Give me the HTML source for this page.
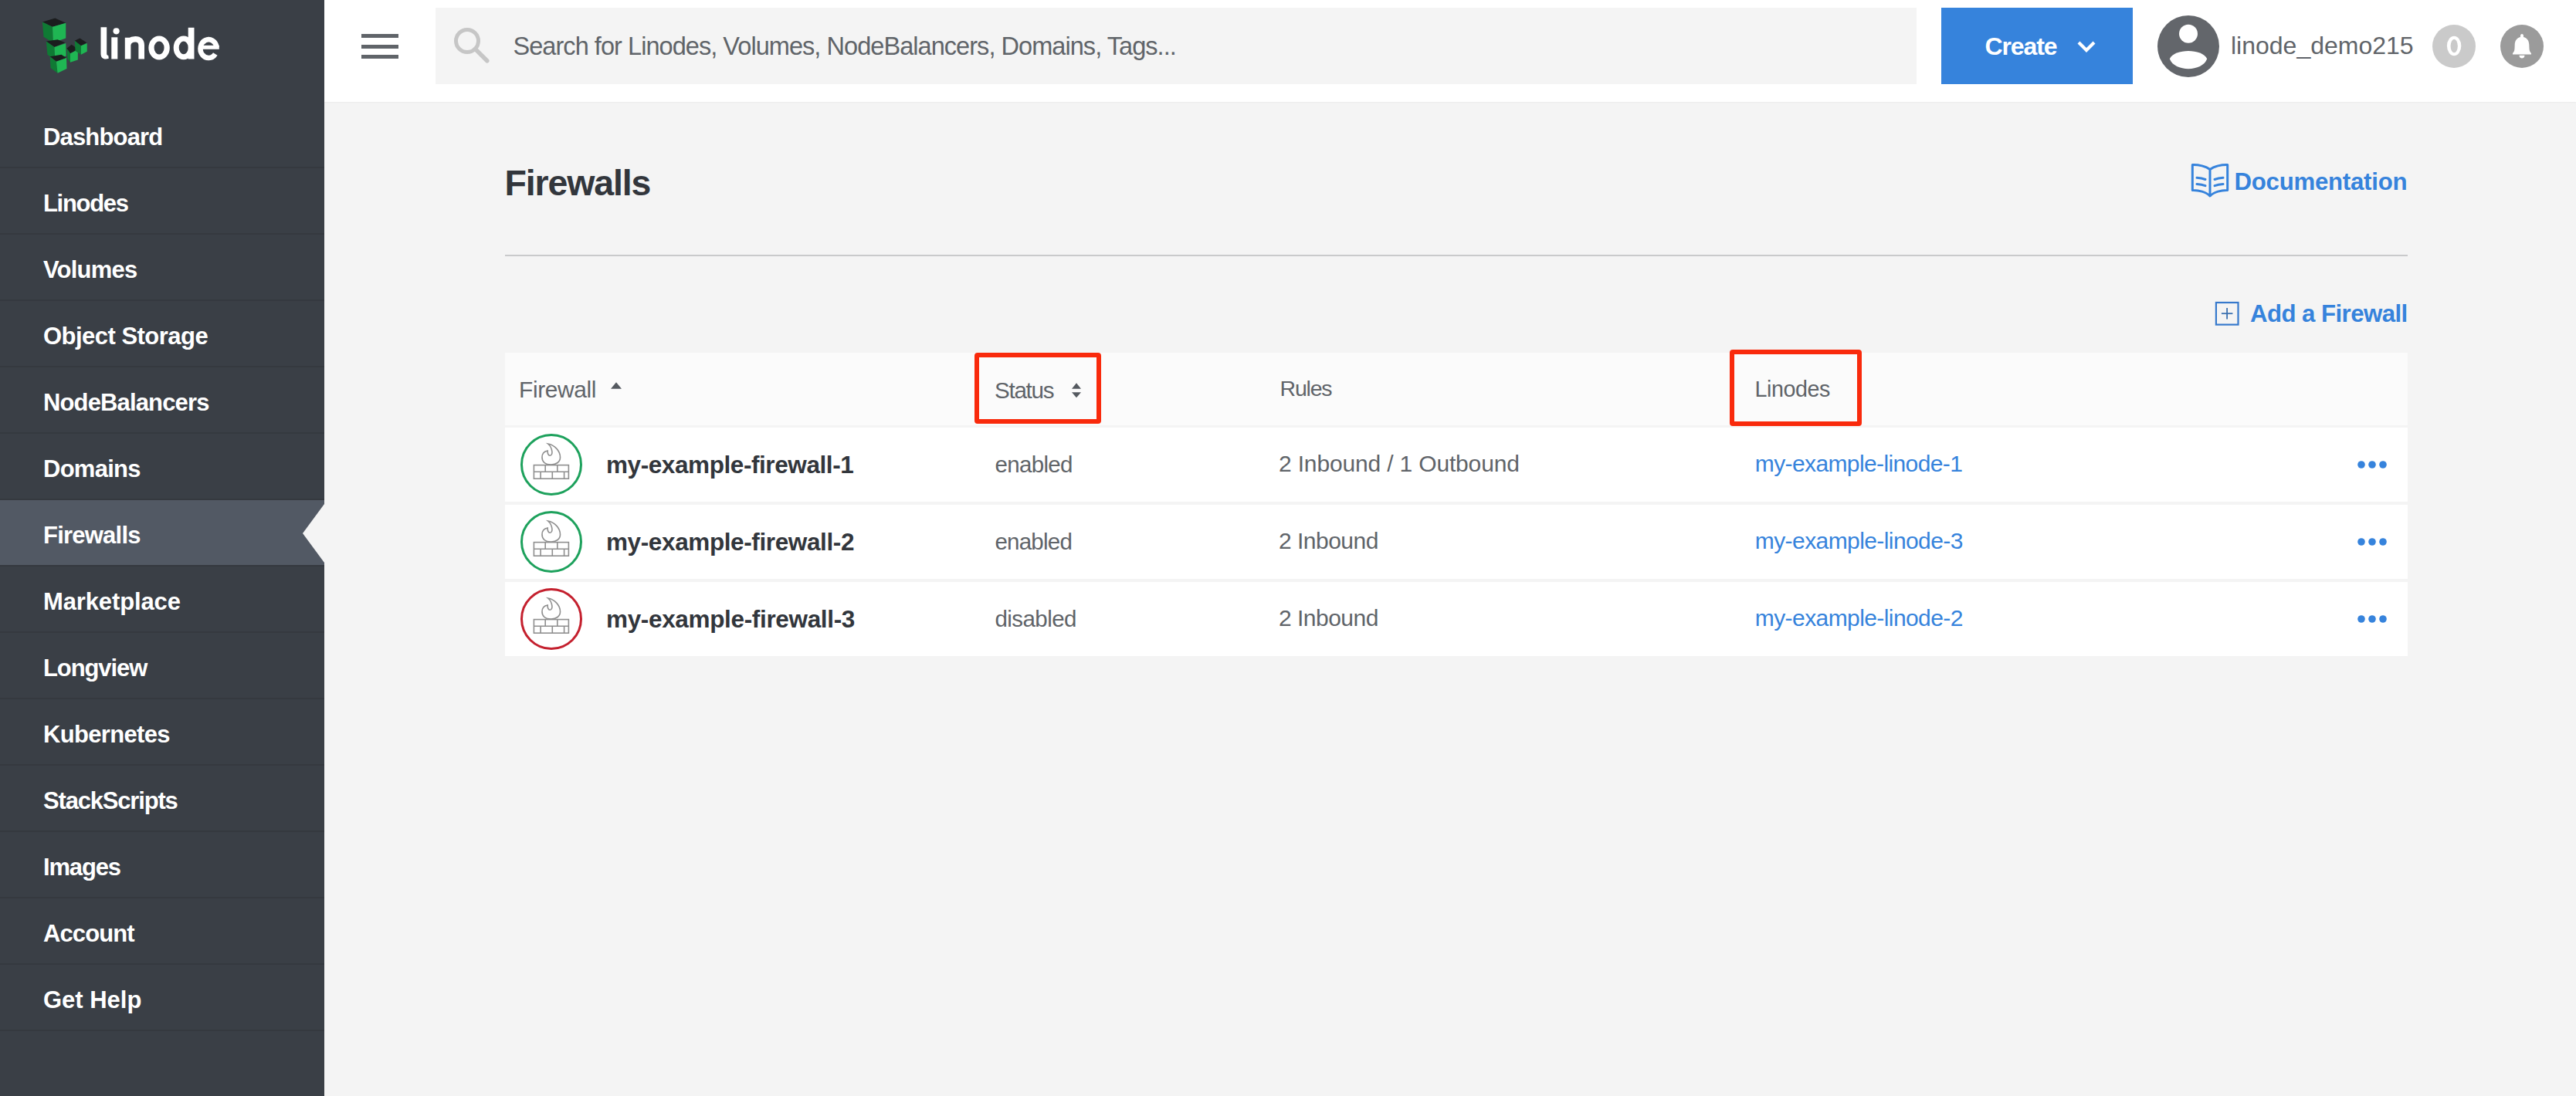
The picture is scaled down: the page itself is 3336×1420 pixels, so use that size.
<!DOCTYPE html>
<html><head><meta charset="utf-8"><style>
*{box-sizing:border-box;margin:0;padding:0}
html,body{width:3336px;height:1420px;overflow:hidden;background:#f4f4f4;font-family:"Liberation Sans",sans-serif}
.abs{position:absolute}
.t{position:absolute;white-space:nowrap;line-height:1}
</style></head><body>
<div class="abs" style="left:0;top:0;width:420px;height:1420px;background:#3a3f46"></div>
<svg class="abs" style="left:45px;top:15px" width="80" height="90" viewBox="0 0 974 1096">
<polygon points="120,165 320,105 490,180 280,240" fill="#1b1d1e"/>
<polygon points="120,165 280,240 290,490 140,400" fill="#0f7a34"/>
<polygon points="280,240 490,180 490,420 290,490" fill="#1fb653"/>
<polygon points="180,470 360,440 480,490 310,560" fill="#1b1d1e"/>
<polygon points="180,470 310,560 320,760 200,680" fill="#0f7a34"/>
<polygon points="310,560 490,500 495,700 320,760" fill="#1fb653"/>
<polygon points="240,710 420,680 500,730 340,790" fill="#1b1d1e"/>
<polygon points="240,710 340,790 360,970 250,890" fill="#0f7a34"/>
<polygon points="340,790 500,730 505,900 360,970" fill="#1fb653"/>
<polygon points="505,580 580,520 680,590 560,660" fill="#1b1d1e"/>
<polygon points="505,580 560,660 560,800 515,740" fill="#0f7a34"/>
<polygon points="560,660 680,600 680,760 560,800" fill="#1fb653"/>
<polygon points="630,460 710,420 820,490 730,540" fill="#1b1d1e"/>
<polygon points="630,460 730,540 730,680 640,620" fill="#0f7a34"/>
<polygon points="730,540 825,500 825,630 730,680" fill="#1fb653"/>
</svg>
<svg class="abs" style="left:0;top:0" width="420" height="131" viewBox="0 0 420 131">
<g fill="none" stroke="#fff">

<path d="M148.3,48.3 L148.3,76.5" stroke-width="8"/>
<path d="M165.6,48.7 L165.6,76.5 M165.6,58 C166.5,53.2 170,50.7 175.3,50.7 C180.8,50.7 183.2,53.8 183.2,58.8 L183.2,76.5" stroke-width="7.6"/>
<ellipse cx="206.1" cy="62" rx="10.1" ry="12" stroke-width="7.2"/>
<ellipse cx="237.8" cy="61.9" rx="9.6" ry="11.9" stroke-width="7"/>
<path d="M247.6,35.8 L247.6,76.5" stroke-width="7.8"/>
<path d="M258,61.3 L283.8,61.3" stroke-width="5"/>
<path d="M280.6,61.3 A10.6,11.9 0 1 0 278.8,70" stroke-width="6.6"/>
</g>
<circle cx="150.6" cy="40.3" r="4.1" fill="#fff"/>
<path d="M130.5,35.3 L138.2,35.3 L138.2,69.3 C138.2,71.3 138.9,72 140.3,72 L140.8,75.8 C139.6,76.3 138.3,76.5 137,76.5 C132.8,76.5 130.5,74 130.5,69.5 Z" fill="#fff"/>
</svg>
<div class="abs" style="left:0;top:132px;width:420px;height:86px;background:transparent;border-bottom:2px solid #35393f"></div>
<div class="t" style="left:56.00px;top:161.76px;font-size:31px;font-weight:bold;color:#fff;letter-spacing:-0.838px;">Dashboard</div>
<div class="abs" style="left:0;top:218px;width:420px;height:86px;background:transparent;border-bottom:2px solid #35393f"></div>
<div class="t" style="left:56.00px;top:247.76px;font-size:31px;font-weight:bold;color:#fff;letter-spacing:-1.317px;">Linodes</div>
<div class="abs" style="left:0;top:304px;width:420px;height:86px;background:transparent;border-bottom:2px solid #35393f"></div>
<div class="t" style="left:56.00px;top:333.76px;font-size:31px;font-weight:bold;color:#fff;letter-spacing:-0.783px;">Volumes</div>
<div class="abs" style="left:0;top:390px;width:420px;height:86px;background:transparent;border-bottom:2px solid #35393f"></div>
<div class="t" style="left:56.00px;top:419.76px;font-size:31px;font-weight:bold;color:#fff;letter-spacing:-0.523px;">Object Storage</div>
<div class="abs" style="left:0;top:476px;width:420px;height:86px;background:transparent;border-bottom:2px solid #35393f"></div>
<div class="t" style="left:56.00px;top:505.76px;font-size:31px;font-weight:bold;color:#fff;letter-spacing:-0.858px;">NodeBalancers</div>
<div class="abs" style="left:0;top:562px;width:420px;height:86px;background:transparent;border-bottom:2px solid #35393f"></div>
<div class="t" style="left:56.00px;top:591.76px;font-size:31px;font-weight:bold;color:#fff;letter-spacing:-0.733px;">Domains</div>
<div class="abs" style="left:0;top:648px;width:420px;height:86px;background:#525964;border-bottom:2px solid #35393f"></div>
<div class="t" style="left:56.00px;top:677.76px;font-size:31px;font-weight:bold;color:#fff;letter-spacing:-0.775px;">Firewalls</div>
<div class="abs" style="left:0;top:734px;width:420px;height:86px;background:transparent;border-bottom:2px solid #35393f"></div>
<div class="t" style="left:56.00px;top:763.76px;font-size:31px;font-weight:bold;color:#fff;letter-spacing:-0.13px;">Marketplace</div>
<div class="abs" style="left:0;top:820px;width:420px;height:86px;background:transparent;border-bottom:2px solid #35393f"></div>
<div class="t" style="left:56.00px;top:849.76px;font-size:31px;font-weight:bold;color:#fff;letter-spacing:-1.1px;">Longview</div>
<div class="abs" style="left:0;top:906px;width:420px;height:86px;background:transparent;border-bottom:2px solid #35393f"></div>
<div class="t" style="left:56.00px;top:935.76px;font-size:31px;font-weight:bold;color:#fff;letter-spacing:-0.667px;">Kubernetes</div>
<div class="abs" style="left:0;top:992px;width:420px;height:86px;background:transparent;border-bottom:2px solid #35393f"></div>
<div class="t" style="left:56.00px;top:1021.76px;font-size:31px;font-weight:bold;color:#fff;letter-spacing:-1.182px;">StackScripts</div>
<div class="abs" style="left:0;top:1078px;width:420px;height:86px;background:transparent;border-bottom:2px solid #35393f"></div>
<div class="t" style="left:56.00px;top:1107.76px;font-size:31px;font-weight:bold;color:#fff;letter-spacing:-1.16px;">Images</div>
<div class="abs" style="left:0;top:1164px;width:420px;height:86px;background:transparent;border-bottom:2px solid #35393f"></div>
<div class="t" style="left:56.00px;top:1193.76px;font-size:31px;font-weight:bold;color:#fff;letter-spacing:-0.9px;">Account</div>
<div class="abs" style="left:0;top:1250px;width:420px;height:86px;background:transparent;border-bottom:2px solid #35393f"></div>
<div class="t" style="left:56.00px;top:1279.76px;font-size:31px;font-weight:bold;color:#fff;letter-spacing:-0.014px;">Get Help</div>
<svg class="abs" style="left:392px;top:652.5px" width="28" height="76" viewBox="0 0 28 76"><polygon points="28,0 0,38 28,76" fill="#f4f4f4"/></svg>
<div class="abs" style="left:420px;top:0;width:2916px;height:132px;background:#fff;box-shadow:0 1px 2px rgba(0,0,0,0.04)"></div>
<div class="abs" style="left:468px;top:44px;width:48px;height:5px;background:#606469"></div>
<div class="abs" style="left:468px;top:57.5px;width:48px;height:5px;background:#606469"></div>
<div class="abs" style="left:468px;top:71px;width:48px;height:5px;background:#606469"></div>
<div class="abs" style="left:564px;top:10px;width:1918px;height:99px;background:#f4f4f4"></div>
<svg class="abs" style="left:585px;top:33px" width="52" height="52" viewBox="0 0 52 52">
<circle cx="20" cy="20" r="14.5" fill="none" stroke="#c6c6c6" stroke-width="5"/>
<line x1="30.5" y1="30.5" x2="45.8" y2="45.8" stroke="#c6c6c6" stroke-width="5.5" stroke-linecap="round"/>
</svg>
<div class="t" style="left:664.50px;top:44.49px;font-size:32.5px;font-weight:normal;color:#606469;letter-spacing:-0.95px;">Search for Linodes, Volumes, NodeBalancers, Domains, Tags...</div>
<div class="abs" style="left:2514px;top:10px;width:248px;height:99px;background:#3683dc"></div>
<div class="t" style="left:2570.50px;top:44.11px;font-size:32px;font-weight:bold;color:#fff;letter-spacing:-1.1px;">Create</div>
<svg class="abs" style="left:2688px;top:50px" width="28" height="22" viewBox="0 0 28 22">
<polyline points="4,5 14,15 24,5" fill="none" stroke="#fff" stroke-width="4.2"/></svg>
<svg class="abs" style="left:2794px;top:20px" width="80" height="80" viewBox="0 0 80 80">
<circle cx="40" cy="40" r="40" fill="#63666b"/>
<circle cx="40" cy="23.8" r="12" fill="#fff"/>
<path d="M15.8,56.3 C22,42.6 58,42.6 64.2,56.3 C58,73.5 22,73.5 15.8,56.3 Z" fill="#fff"/></svg>
<div class="t" style="left:2889.00px;top:42.91px;font-size:32px;font-weight:normal;color:#606469;letter-spacing:0px;">linode_demo215</div>
<div class="abs" style="left:3150px;top:32px;width:56px;height:56px;border-radius:50%;background:#cacaca"></div>
<svg class="abs" style="left:3150px;top:32px" width="56" height="56" viewBox="0 0 56 56"><ellipse cx="28.1" cy="27.5" rx="9.2" ry="12.7" fill="#fff"/><ellipse cx="28.2" cy="27.6" rx="4.65" ry="8.75" fill="#cacaca"/></svg>
<svg class="abs" style="left:3238px;top:32px" width="56" height="56" viewBox="0 0 56 56">
<circle cx="28" cy="28" r="28" fill="#9b9b9b"/>
<path d="M28,12 C29.3,12 30,13 30,14.3 L30,16 C34.5,17.2 37.3,20.8 37.3,26 L37.5,31 C37.7,34 38.5,35.5 40,37 L40,38.4 L16,38.4 L16,37 C17.5,35.5 18.3,34 18.5,31 L18.7,26 C18.7,20.8 21.5,17.2 26,16 L26,14.3 C26,13 26.7,12 28,12 Z" fill="#fff"/>
<path d="M24.5,39.8 L31.5,39.8 C31.5,42 30,43.5 28,43.5 C26,43.5 24.5,42 24.5,39.8 Z" fill="#fff"/></svg>
<div class="t" style="left:653.50px;top:214.24px;font-size:46.5px;font-weight:bold;color:#32363c;letter-spacing:-1.15px;">Firewalls</div>
<svg class="abs" style="left:2836px;top:210px" width="52" height="48" viewBox="0 0 52 48">
<path d="M26,9.5 C21,5.5 11,3.2 3.3,3.5 L3.3,36.5 C11,36.2 21,38.5 26,44 C31,38.5 41,36.2 48.7,36.5 L48.7,3.5 C41,3.2 31,5.5 26,9.5 Z M26,9.5 L26,44" fill="none" stroke="#3683dc" stroke-width="3" stroke-linejoin="round"/>
<path d="M9,20.3 C13,20.5 17,21.3 20,22.5 M9,28.5 C13,28.7 17,29.5 20,30.7 M32,22.5 C35,21.3 39,20.5 43,20.3 M32,30.7 C35,29.5 39,28.7 43,28.5" fill="none" stroke="#3683dc" stroke-width="3" stroke-linecap="round"/></svg>
<div class="t" style="left:2893.50px;top:219.59px;font-size:31.2px;font-weight:bold;color:#3683dc;letter-spacing:-0.25px;">Documentation</div>
<div class="abs" style="left:654px;top:330px;width:2464px;height:2px;background:#c9cacb"></div>
<svg class="abs" style="left:2868px;top:390px" width="33" height="33" viewBox="0 0 33 33">
<rect x="1.9" y="2" width="28.6" height="28.6" fill="none" stroke="#3679cc" stroke-width="2.2"/>
<line x1="16.1" y1="9.1" x2="16.1" y2="23.6" stroke="#3b70b0" stroke-width="1.8"/>
<line x1="8.9" y1="16.2" x2="23.4" y2="16.2" stroke="#3b70b0" stroke-width="1.8"/></svg>
<div class="t" style="left:2914.00px;top:391.29px;font-size:31.2px;font-weight:bold;color:#3683dc;letter-spacing:-0.55px;">Add a Firewall</div>
<div class="abs" style="left:654px;top:457px;width:2464px;height:94px;background:#fbfbfb"></div>
<div class="t" style="left:672.00px;top:490.39px;font-size:29.9px;font-weight:normal;color:#606469;letter-spacing:-0.37px;">Firewall</div>
<svg class="abs" style="left:790px;top:494px" width="16" height="11" viewBox="0 0 16 11"><polygon points="1,9.7 8,1.3 15,9.7" fill="#555a60"/></svg>
<div class="t" style="left:1288.00px;top:491.44px;font-size:29.6px;font-weight:normal;color:#606469;letter-spacing:-1.28px;">Status</div>
<svg class="abs" style="left:1387px;top:495px" width="14" height="22" viewBox="0 0 14 22"><polygon points="1,8.7 7,1.2 13,8.7" fill="#555a60"/><polygon points="1,13.3 7,20.2 13,13.3" fill="#555a60"/></svg>
<div class="t" style="left:1657.50px;top:489.47px;font-size:28.5px;font-weight:normal;color:#606469;letter-spacing:-1.2px;">Rules</div>
<div class="t" style="left:2272.50px;top:489.51px;font-size:28.7px;font-weight:normal;color:#606469;letter-spacing:-0.45px;">Linodes</div>
<div class="abs" style="left:654px;top:554px;width:2464px;height:96px;background:#fff"></div>
<svg class="abs" style="left:674px;top:562px" width="80" height="80" viewBox="0 0 80 80">
<circle cx="40" cy="40" r="38.5" fill="none" stroke="#1da15c" stroke-width="3"/>
<g fill="none" stroke="#8f8f8f" stroke-width="1.6">
<rect x="17.4" y="40.6" width="45" height="17.6"/>
<line x1="17.4" y1="49.2" x2="62.4" y2="49.2"/>
<line x1="32.2" y1="40.6" x2="32.2" y2="49.2"/><line x1="47.8" y1="40.6" x2="47.8" y2="49.2"/>
<line x1="26.1" y1="49.2" x2="26.1" y2="58.2"/><line x1="41.3" y1="49.2" x2="41.3" y2="58.2"/><line x1="56.6" y1="49.2" x2="56.6" y2="58.2"/>
<path d="M35.6,13 C44,14.5 51.5,22 51.5,30.5 C51.5,36.5 46.5,40 39.5,40 C32,40 28,36 28,30.5 C28,26 30.8,22.8 35.2,22 C35,25.5 36,28.2 38.2,28.2 C40.5,28.2 41.2,25.5 40.9,23 C40.5,19 38.5,15.5 35.6,13 Z"/>
</g></svg>
<div class="t" style="left:785.00px;top:586.64px;font-size:31.5px;font-weight:bold;color:#32363c;letter-spacing:-0.42px;">my-example-firewall-1</div>
<div class="t" style="left:1288.50px;top:586.83px;font-size:29.5px;font-weight:normal;color:#606469;letter-spacing:-0.683px;">enabled</div>
<div class="t" style="left:1656.00px;top:586.40px;font-size:30px;font-weight:normal;color:#606469;letter-spacing:-0.162px;">2 Inbound / 1 Outbound</div>
<div class="t" style="left:2272.80px;top:586.11px;font-size:30px;font-weight:normal;color:#3683dc;letter-spacing:-0.611px;">my-example-linode-1</div>
<svg class="abs" style="left:3050px;top:594px" width="44" height="16" viewBox="0 0 44 16"><circle cx="8" cy="8" r="4.8" fill="#3683dc"/><circle cx="22" cy="8" r="4.8" fill="#3683dc"/><circle cx="36" cy="8" r="4.8" fill="#3683dc"/></svg>
<div class="abs" style="left:654px;top:654px;width:2464px;height:96px;background:#fff"></div>
<svg class="abs" style="left:674px;top:662px" width="80" height="80" viewBox="0 0 80 80">
<circle cx="40" cy="40" r="38.5" fill="none" stroke="#1da15c" stroke-width="3"/>
<g fill="none" stroke="#8f8f8f" stroke-width="1.6">
<rect x="17.4" y="40.6" width="45" height="17.6"/>
<line x1="17.4" y1="49.2" x2="62.4" y2="49.2"/>
<line x1="32.2" y1="40.6" x2="32.2" y2="49.2"/><line x1="47.8" y1="40.6" x2="47.8" y2="49.2"/>
<line x1="26.1" y1="49.2" x2="26.1" y2="58.2"/><line x1="41.3" y1="49.2" x2="41.3" y2="58.2"/><line x1="56.6" y1="49.2" x2="56.6" y2="58.2"/>
<path d="M35.6,13 C44,14.5 51.5,22 51.5,30.5 C51.5,36.5 46.5,40 39.5,40 C32,40 28,36 28,30.5 C28,26 30.8,22.8 35.2,22 C35,25.5 36,28.2 38.2,28.2 C40.5,28.2 41.2,25.5 40.9,23 C40.5,19 38.5,15.5 35.6,13 Z"/>
</g></svg>
<div class="t" style="left:785.00px;top:686.64px;font-size:31.5px;font-weight:bold;color:#32363c;letter-spacing:-0.385px;">my-example-firewall-2</div>
<div class="t" style="left:1288.50px;top:686.83px;font-size:29.5px;font-weight:normal;color:#606469;letter-spacing:-0.784px;">enabled</div>
<div class="t" style="left:1656.00px;top:686.40px;font-size:30px;font-weight:normal;color:#606469;letter-spacing:-0.514px;">2 Inbound</div>
<div class="t" style="left:2272.80px;top:686.11px;font-size:30px;font-weight:normal;color:#3683dc;letter-spacing:-0.583px;">my-example-linode-3</div>
<svg class="abs" style="left:3050px;top:694px" width="44" height="16" viewBox="0 0 44 16"><circle cx="8" cy="8" r="4.8" fill="#3683dc"/><circle cx="22" cy="8" r="4.8" fill="#3683dc"/><circle cx="36" cy="8" r="4.8" fill="#3683dc"/></svg>
<div class="abs" style="left:654px;top:754px;width:2464px;height:96px;background:#fff"></div>
<svg class="abs" style="left:674px;top:762px" width="80" height="80" viewBox="0 0 80 80">
<circle cx="40" cy="40" r="38.5" fill="none" stroke="#c4202e" stroke-width="3"/>
<g fill="none" stroke="#8f8f8f" stroke-width="1.6">
<rect x="17.4" y="40.6" width="45" height="17.6"/>
<line x1="17.4" y1="49.2" x2="62.4" y2="49.2"/>
<line x1="32.2" y1="40.6" x2="32.2" y2="49.2"/><line x1="47.8" y1="40.6" x2="47.8" y2="49.2"/>
<line x1="26.1" y1="49.2" x2="26.1" y2="58.2"/><line x1="41.3" y1="49.2" x2="41.3" y2="58.2"/><line x1="56.6" y1="49.2" x2="56.6" y2="58.2"/>
<path d="M35.6,13 C44,14.5 51.5,22 51.5,30.5 C51.5,36.5 46.5,40 39.5,40 C32,40 28,36 28,30.5 C28,26 30.8,22.8 35.2,22 C35,25.5 36,28.2 38.2,28.2 C40.5,28.2 41.2,25.5 40.9,23 C40.5,19 38.5,15.5 35.6,13 Z"/>
</g></svg>
<div class="t" style="left:785.00px;top:786.64px;font-size:31.5px;font-weight:bold;color:#32363c;letter-spacing:-0.34px;">my-example-firewall-3</div>
<div class="t" style="left:1288.50px;top:786.83px;font-size:29.5px;font-weight:normal;color:#606469;letter-spacing:-0.572px;">disabled</div>
<div class="t" style="left:1656.00px;top:786.40px;font-size:30px;font-weight:normal;color:#606469;letter-spacing:-0.514px;">2 Inbound</div>
<div class="t" style="left:2272.80px;top:786.11px;font-size:30px;font-weight:normal;color:#3683dc;letter-spacing:-0.583px;">my-example-linode-2</div>
<svg class="abs" style="left:3050px;top:794px" width="44" height="16" viewBox="0 0 44 16"><circle cx="8" cy="8" r="4.8" fill="#3683dc"/><circle cx="22" cy="8" r="4.8" fill="#3683dc"/><circle cx="36" cy="8" r="4.8" fill="#3683dc"/></svg>
<div class="abs" style="left:1262px;top:457px;width:164px;height:92px;border:6px solid #f92a0c;border-radius:4px"></div>
<div class="abs" style="left:2240px;top:453px;width:171px;height:99px;border:6px solid #f92a0c;border-radius:4px"></div>
</body></html>
